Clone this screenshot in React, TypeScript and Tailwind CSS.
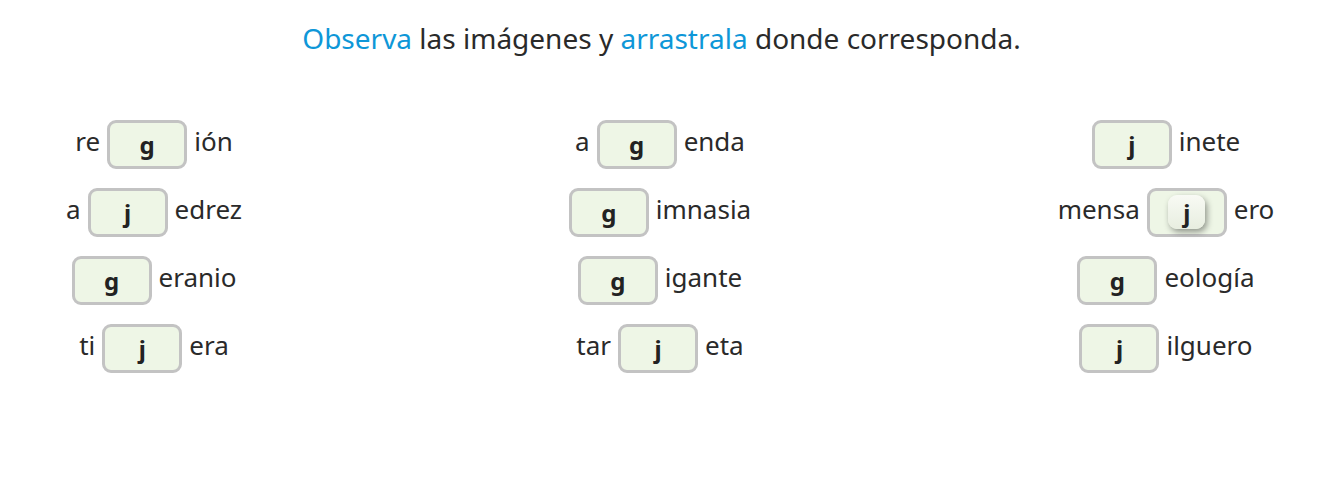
import React from "react";

type Item = { pre: string; letter: string; post: string; drag?: boolean };

const cols: Item[][] = [
  [
    { pre: "re", letter: "g", post: "ión" },
    { pre: "a", letter: "j", post: "edrez" },
    { pre: "", letter: "g", post: "eranio" },
    { pre: "ti", letter: "j", post: "era" },
  ],
  [
    { pre: "a", letter: "g", post: "enda" },
    { pre: "", letter: "g", post: "imnasia" },
    { pre: "", letter: "g", post: "igante" },
    { pre: "tar", letter: "j", post: "eta" },
  ],
  [
    { pre: "", letter: "j", post: "inete" },
    { pre: "mensa", letter: "j", post: "ero", drag: true },
    { pre: "", letter: "g", post: "eología" },
    { pre: "", letter: "j", post: "ilguero" },
  ],
];

function Row({ it }: { it: Item }) {
  return (
    <div className="flex items-center justify-center gap-[7px] h-[48px]">
      {it.pre && <span className="pb-[5px]">{it.pre}</span>}
      <div className="w-[80px] h-[49px] rounded-[9px] border-[3px] border-[#c3c3c3] bg-[#eef6e6] flex items-center justify-center">
        {it.drag ? (
          <div className="w-[37px] h-[34px] rounded-[9px] bg-gradient-to-b from-[#f8faf4] to-[#e8eee0] shadow-[2px_3px_6px_rgba(0,0,0,0.4)] flex items-center justify-center font-bold text-[24px] text-[#222]">
            <span className="pt-[2px]">{it.letter}</span>
          </div>
        ) : (
          <span className="font-bold text-[24px] text-[#222] pt-[2px]">{it.letter}</span>
        )}
      </div>
      <span className="pb-[5px]">{it.post}</span>
    </div>
  );
}

export default function App() {
  return (
    <div
      className="w-[1331px] h-[504px] bg-white text-[#2a2a2a]"
      style={{ fontFamily: '"Noto Sans", "Open Sans", sans-serif' }}
    >
      <div className="pt-[18px] text-center text-[28px] leading-[40px] pr-[8px]">
        <span className="text-[#0e97d8]">Observa</span> las imágenes y{" "}
        <span className="text-[#0e97d8]">arrastrala</span> donde corresponda.
      </div>
      <div className="mt-[62px] grid grid-cols-[308px_308px_308px] gap-x-[198px] text-[26px]">
        {cols.map((c, i) => (
          <div key={i} className="flex flex-col gap-[20px]">
            {c.map((it, j) => (
              <Row key={j} it={it} />
            ))}
          </div>
        ))}
      </div>
    </div>
  );
}
